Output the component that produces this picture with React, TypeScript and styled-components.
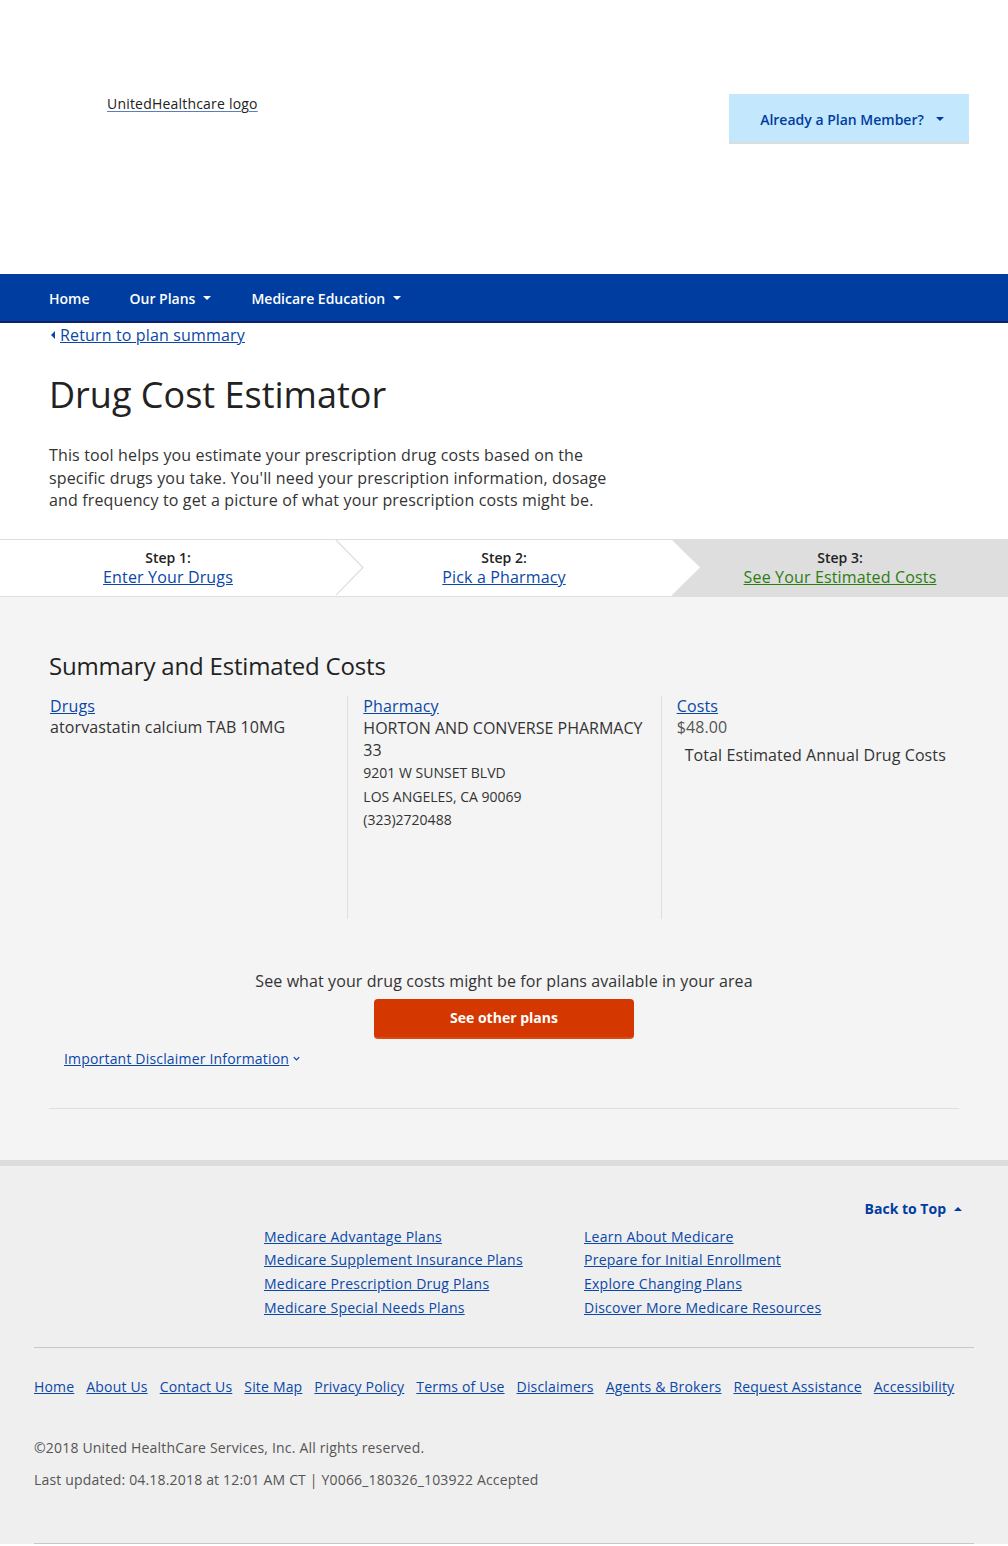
import React from "react";
import styled, { createGlobalStyle } from "styled-components";

const GlobalStyle = createGlobalStyle`
  html, body { margin: 0; padding: 0; }
  body {
    font-family: "Open Sans", "Liberation Sans", Arial, sans-serif;
    color: #333;
    background: #fff;
  }
  * { box-sizing: border-box; }
`;

const LINK = "#0a47a8";
const NAVY = "#003da1";

const Header = styled.header`
  height: 274px;
  display: flex;
  justify-content: space-between;
  align-items: flex-start;
  padding: 94px 39px 0 107px;
`;

const LogoLink = styled.a`
  font-size: 14px;
  line-height: 20px;
  letter-spacing: 0.2px;
  color: #222;
  text-decoration: underline;
  text-decoration-color: #5a7fc0;
  text-underline-offset: 2px;
`;

const MemberButton = styled.button`
  width: 240px;
  height: 50px;
  border: none;
  border-bottom: 2px solid #dcdcdc;
  background: #c3e7fd;
  color: ${NAVY};
  font-family: inherit;
  font-size: 14px;
  font-weight: 600;
  display: flex;
  align-items: center;
  justify-content: center;
  gap: 12px;
  padding: 2px 0 0 6px;
`;

const Caret = styled.span<{ $color?: string; $up?: boolean }>`
  display: inline-block;
  width: 0;
  height: 0;
  border-left: 4px solid transparent;
  border-right: 4px solid transparent;
  ${(p) =>
    p.$up
      ? `border-bottom: 4px solid ${p.$color || "#fff"};`
      : `border-top: 4px solid ${p.$color || "#fff"};`}
`;

const NavBar = styled.nav`
  height: 49px;
  background: ${NAVY};
  border-bottom: 2px solid #0f1f68;
  display: flex;
  align-items: center;
  padding: 0 0 0 29px;
`;

const NavItem = styled.a`
  color: #fff;
  font-size: 14px;
  font-weight: 600;
  padding: 0 20px;
  display: flex;
  align-items: center;
  gap: 8px;
  text-decoration: none;
  margin-top: 1px;
`;

const ReturnRow = styled.div`
  padding-left: 51px;
  display: flex;
  align-items: center;
  gap: 5px;
  height: 24px;
`;

const LeftCaret = styled.span`
  display: inline-block;
  width: 0;
  height: 0;
  border-top: 4px solid transparent;
  border-bottom: 4px solid transparent;
  border-right: 4px solid ${LINK};
`;

const TextLink = styled.a<{ $size?: number; $color?: string }>`
  color: ${(p) => p.$color || LINK};
  font-size: ${(p) => p.$size || 16}px;
  letter-spacing: ${(p) => ((p.$size || 16) === 14 ? 0.18 : 0.15)}px;
  text-decoration: underline;
`;

const Intro = styled.section`
  padding: 25px 49px 27px;
`;

const Title = styled.h1`
  margin: 0;
  font-size: 36px;
  font-weight: 400;
  line-height: 46px;
  color: #222;
`;

const IntroText = styled.p`
  margin: 26px 0 0;
  max-width: 575px;
  font-size: 16px;
  line-height: 22.5px;
  letter-spacing: 0.15px;
  color: #333;
`;

const Steps = styled.div`
  display: flex;
  border-top: 1px solid #dedede;
  border-bottom: 1px solid #dedede;
  height: 58px;
`;

const Step = styled.div<{ $active?: boolean }>`
  flex: 1;
  position: relative;
  background: ${(p) => (p.$active ? "#dedede" : "#fff")};
  display: flex;
  flex-direction: column;
  align-items: center;
  justify-content: center;
  padding-top: 1px;
`;

const StepArrow = styled.svg`
  position: absolute;
  top: 0;
  right: -28px;
  width: 28px;
  height: 100%;
  z-index: 1;
  overflow: visible;
`;

const StepLabel = styled.div`
  font-size: 14px;
  font-weight: 600;
  line-height: 19px;
  color: #222;
`;

const StepLink = styled.a<{ $green?: boolean }>`
  font-size: 16px;
  line-height: 21px;
  letter-spacing: 0.15px;
  color: ${(p) => (p.$green ? "#2c7d10" : LINK)};
  text-decoration: underline;
`;

const Summary = styled.section`
  background: #f4f4f4;
  padding: 54px 0 51px;
`;

const Container = styled.div`
  width: 940px;
  margin: 0 auto;
`;

const SummaryTitle = styled.h2`
  margin: 0 15px;
  font-size: 24px;
  font-weight: 400;
  line-height: 29px;
  letter-spacing: -0.18px;
  color: #222;
`;

const Columns = styled.div`
  display: grid;
  grid-template-columns: repeat(3, 1fr);
  margin-top: 16px;
  height: 223px;
`;

const Column = styled.div<{ $divider?: boolean }>`
  padding: 0 15px;
  border-left: 1px solid ${(p) => (p.$divider ? "#dedede" : "transparent")};
  font-size: 16px;
  line-height: 21px;
  color: #333;
`;

const ColHead = styled.a`
  display: block;
  color: ${LINK};
  text-decoration: underline;
  font-size: 16px;
  line-height: 21px;
  letter-spacing: 0.15px;
`;

const Line = styled.div<{
  $small?: boolean;
  $lh?: number;
  $muted?: boolean;
  $indent?: number;
  $mt?: number;
  $tight?: boolean;
}>`
  font-size: ${(p) => (p.$small ? 14 : 16)}px;
  line-height: ${(p) => p.$lh || 21}px;
  letter-spacing: ${(p) => (p.$tight ? 0 : 0.1)}px;
  color: ${(p) => (p.$muted ? "#555" : "#333")};
  padding-left: ${(p) => p.$indent || 0}px;
  margin-top: ${(p) => p.$mt || 0}px;
`;

const Cta = styled.div`
  display: flex;
  flex-direction: column;
  align-items: center;
  margin-top: 51px;
`;

const CtaText = styled.p`
  margin: 0;
  font-size: 16px;
  line-height: 22px;
  letter-spacing: 0.1px;
  color: #333;
`;

const OrangeButton = styled.button`
  margin-top: 7px;
  width: 260px;
  height: 40px;
  border: none;
  border-radius: 4px;
  background: #d43800;
  border-bottom: 2px solid #e04a10;
  color: #fff;
  font-family: inherit;
  font-size: 14px;
  font-weight: 700;
`;

const Disclaimer = styled.div`
  margin: 10px 0 0 30px;
  display: flex;
  align-items: center;
  gap: 3px;
  line-height: 20px;
`;

const Divider = styled.hr<{ $color?: string; $inset?: number }>`
  border: none;
  border-top: 1px solid ${(p) => p.$color || "#dedede"};
  margin: 0 ${(p) => p.$inset || 0}px;
`;

const Spacer = styled.div<{ $h: number }>`
  height: ${(p) => p.$h}px;
`;

const Footer = styled.footer`
  background: #efefef;
  border-top: 6px solid #dcdcdc;
  padding-top: 33px;
`;

const BackTop = styled.a`
  display: flex;
  align-items: center;
  justify-content: flex-end;
  gap: 8px;
  padding-right: 12px;
  font-size: 14px;
  font-weight: 700;
  line-height: 20px;
  color: ${NAVY};
  text-decoration: none;
`;

const FooterGrid = styled.div`
  display: grid;
  grid-template-columns: 320px 320px;
  padding-left: 230px;
  margin-top: 6px;
  margin-bottom: 28px;
`;

const FooterCol = styled.div`
  display: flex;
  flex-direction: column;
  align-items: flex-start;
`;

const FooterLink = styled.a`
  font-size: 14px;
  line-height: 23.7px;
  letter-spacing: 0.25px;
  color: ${LINK};
  text-decoration: underline;
`;

const BottomLinks = styled.div`
  display: flex;
  gap: 12px;
  margin-top: 29px;
  line-height: 20px;
`;

const Legal = styled.p<{ $mt: number }>`
  margin: ${(p) => p.$mt}px 0 0;
  font-size: 14px;
  line-height: 20px;
  letter-spacing: 0.18px;
  color: #555;
`;

const FooterEnd = styled.div`
  height: 53px;
`;

const Chevron = () => (
  <svg width="9" height="9" viewBox="0 0 10 10" aria-hidden="true">
    <path d="M2 3.5 L5 6.5 L8 3.5" fill="none" stroke={LINK} strokeWidth="1.4" />
  </svg>
);

const footerLeft = [
  "Medicare Advantage Plans",
  "Medicare Supplement Insurance Plans",
  "Medicare Prescription Drug Plans",
  "Medicare Special Needs Plans",
];
const footerRight = [
  "Learn About Medicare",
  "Prepare for Initial Enrollment",
  "Explore Changing Plans",
  "Discover More Medicare Resources",
];
const bottomLinks = [
  "Home",
  "About Us",
  "Contact Us",
  "Site Map",
  "Privacy Policy",
  "Terms of Use",
  "Disclaimers",
  "Agents & Brokers",
  "Request Assistance",
  "Accessibility",
];

export default function App() {
  return (
    <>
      <GlobalStyle />
      <Header>
        <LogoLink href="#">UnitedHealthcare logo</LogoLink>
        <MemberButton>
          Already a Plan Member?
          <Caret $color={NAVY} />
        </MemberButton>
      </Header>
      <NavBar>
        <NavItem href="#">Home</NavItem>
        <NavItem href="#">
          Our Plans <Caret />
        </NavItem>
        <NavItem href="#">
          Medicare Education <Caret />
        </NavItem>
      </NavBar>
      <ReturnRow>
        <LeftCaret />
        <TextLink href="#">Return to plan summary</TextLink>
      </ReturnRow>
      <Intro>
        <Title>Drug Cost Estimator</Title>
        <IntroText>
          This tool helps you estimate your prescription drug costs based on the specific drugs you
          take. You'll need your prescription information, dosage and frequency to get a picture of
          what your prescription costs might be.
        </IntroText>
      </Intro>
      <Steps>
        <Step>
          <StepLabel>Step 1:</StepLabel>
          <StepLink href="#">Enter Your Drugs</StepLink>
          <StepArrow viewBox="0 0 28 58" preserveAspectRatio="none">
            <polygon points="-1,0 0,0 27,28.5 0,57 -1,57" fill="#fff" />
            <polyline points="0,0 27,28.5 0,57" fill="none" stroke="#dedede" strokeWidth="1.2" />
          </StepArrow>
        </Step>
        <Step>
          <StepLabel>Step 2:</StepLabel>
          <StepLink href="#">Pick a Pharmacy</StepLink>
          <StepArrow viewBox="0 0 28 58" preserveAspectRatio="none">
            <polygon points="-1,0 0,0 28,28.5 0,57 -1,57" fill="#fff" />
          </StepArrow>
        </Step>
        <Step $active>
          <StepLabel>Step 3:</StepLabel>
          <StepLink href="#" $green>
            See Your Estimated Costs
          </StepLink>
        </Step>
      </Steps>
      <Summary>
        <Container>
          <SummaryTitle>Summary and Estimated Costs</SummaryTitle>
          <Columns>
            <Column>
              <ColHead href="#">Drugs</ColHead>
              <Line>atorvastatin calcium TAB 10MG</Line>
            </Column>
            <Column $divider>
              <ColHead href="#">Pharmacy</ColHead>
              <Line $lh={22} $tight>
                HORTON AND CONVERSE PHARMACY 33
              </Line>
              <Line $small $lh={24} $tight>
                9201 W SUNSET BLVD
              </Line>
              <Line $small $lh={24} $tight>
                LOS ANGELES, CA 90069
              </Line>
              <Line $small $lh={21} $tight>
                (323)2720488
              </Line>
            </Column>
            <Column $divider>
              <ColHead href="#">Costs</ColHead>
              <Line $muted>$48.00</Line>
              <Line $indent={8} $mt={6} $lh={22}>
                Total Estimated Annual Drug Costs
              </Line>
            </Column>
          </Columns>
          <Cta>
            <CtaText>See what your drug costs might be for plans available in your area</CtaText>
            <OrangeButton>See other plans</OrangeButton>
          </Cta>
          <Disclaimer>
            <TextLink href="#" $size={14}>
              Important Disclaimer Information{" "}
            </TextLink>
            <Chevron />
          </Disclaimer>
          <Spacer $h={39} />
          <Divider $inset={15} />
        </Container>
      </Summary>
      <Footer>
        <Container>
          <BackTop href="#">
            Back to Top <Caret $up $color={NAVY} />
          </BackTop>
          <FooterGrid>
            <FooterCol>
              {footerLeft.map((t) => (
                <FooterLink key={t} href="#">
                  {t}
                </FooterLink>
              ))}
            </FooterCol>
            <FooterCol>
              {footerRight.map((t) => (
                <FooterLink key={t} href="#">
                  {t}
                </FooterLink>
              ))}
            </FooterCol>
          </FooterGrid>
          <Divider $color="#c8c8c8" />
          <BottomLinks>
            {bottomLinks.map((t) => (
              <TextLink key={t} href="#" $size={14}>
                {t}
              </TextLink>
            ))}
          </BottomLinks>
          <Legal $mt={41}>©2018 United HealthCare Services, Inc. All rights reserved.</Legal>
          <Legal $mt={12}>Last updated: 04.18.2018 at 12:01 AM CT | Y0066_180326_103922 Accepted</Legal>
          <FooterEnd />
          <Divider $color="#c8c8c8" />
        </Container>
      </Footer>
    </>
  );
}
